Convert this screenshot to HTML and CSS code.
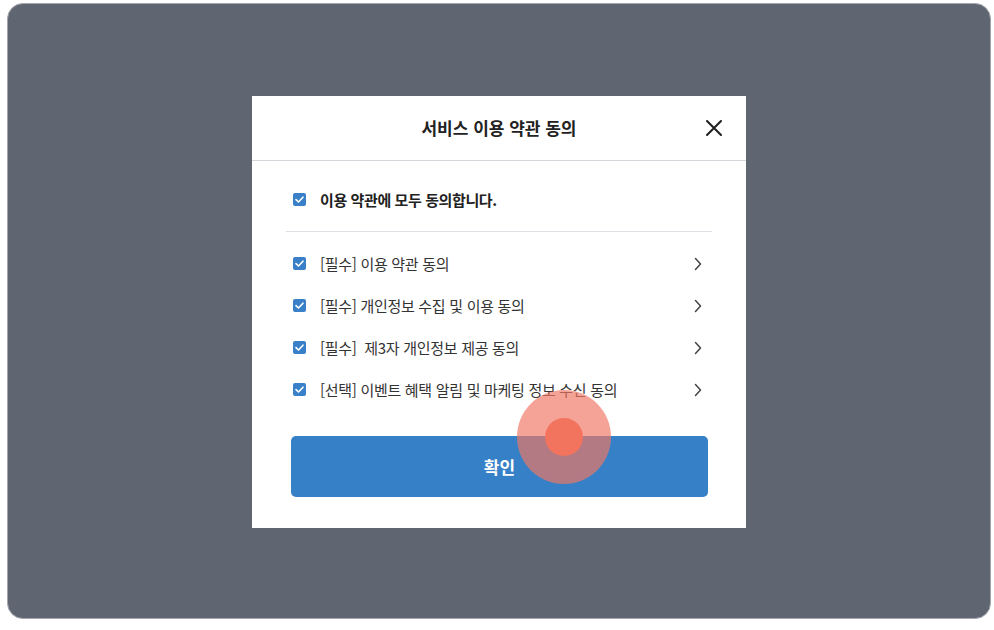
FILE: index.html
```html
<!DOCTYPE html>
<html lang="ko">
<head>
<meta charset="utf-8">
<link rel="stylesheet" href="styles.css">
</head>
<body>
<div class="frame">
  <div class="modal">
    <div class="header">
      <h1 class="title">서비스 이용 약관 동의</h1>
      <button class="close" aria-label="닫기">
        <svg width="18" height="18" viewBox="0 0 18 18"><path d="M2 2L16 16M16 2L2 16" stroke="#222" stroke-width="2.1" stroke-linecap="round" fill="none"/></svg>
      </button>
    </div>
    <div class="body">
      <div class="all-row">
        <span class="cb"><svg width="13" height="13" viewBox="0 0 13 13"><rect width="13" height="13" rx="2" fill="#3a80c9"/><path d="M3 6.6L5.5 9L10 4.2" stroke="#fff" stroke-width="1.6" fill="none" stroke-linecap="round" stroke-linejoin="round"/></svg></span>
        <span class="all-label">이용 약관에 모두 동의합니다.</span>
      </div>
      <div class="divider"></div>
      <ul class="list">
        <li class="item">
          <span class="cb"><svg width="13" height="13" viewBox="0 0 13 13"><rect width="13" height="13" rx="2" fill="#3a80c9"/><path d="M3 6.6L5.5 9L10 4.2" stroke="#fff" stroke-width="1.6" fill="none" stroke-linecap="round" stroke-linejoin="round"/></svg></span>
          <span class="label">[필수] 이용 약관 동의</span>
          <svg class="chev" width="8" height="14" viewBox="0 0 8 14"><path d="M1.5 1.5L6.5 7L1.5 12.5" stroke="#444" stroke-width="1.5" fill="none" stroke-linecap="round" stroke-linejoin="round"/></svg>
        </li>
        <li class="item">
          <span class="cb"><svg width="13" height="13" viewBox="0 0 13 13"><rect width="13" height="13" rx="2" fill="#3a80c9"/><path d="M3 6.6L5.5 9L10 4.2" stroke="#fff" stroke-width="1.6" fill="none" stroke-linecap="round" stroke-linejoin="round"/></svg></span>
          <span class="label">[필수] 개인정보 수집 및 이용 동의</span>
          <svg class="chev" width="8" height="14" viewBox="0 0 8 14"><path d="M1.5 1.5L6.5 7L1.5 12.5" stroke="#444" stroke-width="1.5" fill="none" stroke-linecap="round" stroke-linejoin="round"/></svg>
        </li>
        <li class="item">
          <span class="cb"><svg width="13" height="13" viewBox="0 0 13 13"><rect width="13" height="13" rx="2" fill="#3a80c9"/><path d="M3 6.6L5.5 9L10 4.2" stroke="#fff" stroke-width="1.6" fill="none" stroke-linecap="round" stroke-linejoin="round"/></svg></span>
          <span class="label">[필수]&nbsp; 제3자 개인정보 제공 동의</span>
          <svg class="chev" width="8" height="14" viewBox="0 0 8 14"><path d="M1.5 1.5L6.5 7L1.5 12.5" stroke="#444" stroke-width="1.5" fill="none" stroke-linecap="round" stroke-linejoin="round"/></svg>
        </li>
        <li class="item">
          <span class="cb"><svg width="13" height="13" viewBox="0 0 13 13"><rect width="13" height="13" rx="2" fill="#3a80c9"/><path d="M3 6.6L5.5 9L10 4.2" stroke="#fff" stroke-width="1.6" fill="none" stroke-linecap="round" stroke-linejoin="round"/></svg></span>
          <span class="label">[선택] 이벤트 혜택 알림 및 마케팅 정보 수신 동의</span>
          <svg class="chev" width="8" height="14" viewBox="0 0 8 14"><path d="M1.5 1.5L6.5 7L1.5 12.5" stroke="#444" stroke-width="1.5" fill="none" stroke-linecap="round" stroke-linejoin="round"/></svg>
        </li>
      </ul>
      <button class="confirm">확인</button>
    </div>
    <div class="touch"><div class="touch-core"></div></div>
  </div>
</div>
</body>
</html>
```

FILE: styles.css
```css
* { box-sizing: border-box; }
html, body { margin: 0; padding: 0; background: #ffffff; }
body {
  width: 994px;
  height: 630px;
  font-family: "Noto Sans CJK KR", "Noto Sans", sans-serif;
  color: #333;
}
.frame {
  margin: 3px 3px 0 7px;
  width: 984px;
  height: 616px;
  background: #5f6571;
  border: 1.5px solid #a3a6ad;
  border-radius: 16px;
  display: flex;
  align-items: center;
  justify-content: center;
}
.modal {
  position: relative;
  width: 494px;
  height: 432px;
  background: #fff;
  display: flex;
  flex-direction: column;
  margin-top: 1px;
}
.header {
  position: relative;
  height: 65px;
  border-bottom: 1px solid #d3d6db;
  display: flex;
  align-items: center;
  justify-content: center;
}
.title {
  margin: 0;
  font-size: 17px;
  font-weight: 700;
  color: #222;
  letter-spacing: 0;
}
.close {
  position: absolute;
  right: 23px;
  top: 23px;
  width: 18px;
  height: 18px;
  padding: 0;
  border: 0;
  background: none;
  display: flex;
}
.body {
  padding: 19px 34px 31px;
  display: flex;
  flex-direction: column;
}
.all-row {
  height: 40px;
  display: flex;
  align-items: center;
  padding-left: 7px;
}
.cb { display: flex; width: 13px; height: 13px; margin-right: 14px; }
.all-label {
  font-size: 15px;
  font-weight: 700;
  color: #222;
  letter-spacing: -0.4px;
}
.divider {
  margin-top: 11px;
  height: 1px;
  background: #dcdfe3;
}
.list {
  list-style: none;
  margin: 11px 0 0;
  padding: 0;
}
.item {
  height: 42px;
  display: flex;
  align-items: center;
  padding: 0 10px 0 7px;
}
.label {
  flex: 1;
  font-size: 15px;
  color: #333;
  letter-spacing: -0.3px;
}
.chev { display: block; }
.confirm {
  margin: 25px 4px 0 5px;
  height: 61px;
  border: 0;
  border-radius: 5px;
  background: #3580c6;
  color: #fff;
  font-family: inherit;
  font-size: 17px;
  font-weight: 700;
}
.touch {
  position: absolute;
  left: 265px;
  top: 294px;
  width: 94px;
  height: 94px;
  border-radius: 50%;
  background: rgba(240, 119, 100, 0.68);
  display: flex;
  align-items: center;
  justify-content: center;
}
.touch-core {
  width: 38px;
  height: 38px;
  border-radius: 50%;
  background: #f2745f;
}
```
